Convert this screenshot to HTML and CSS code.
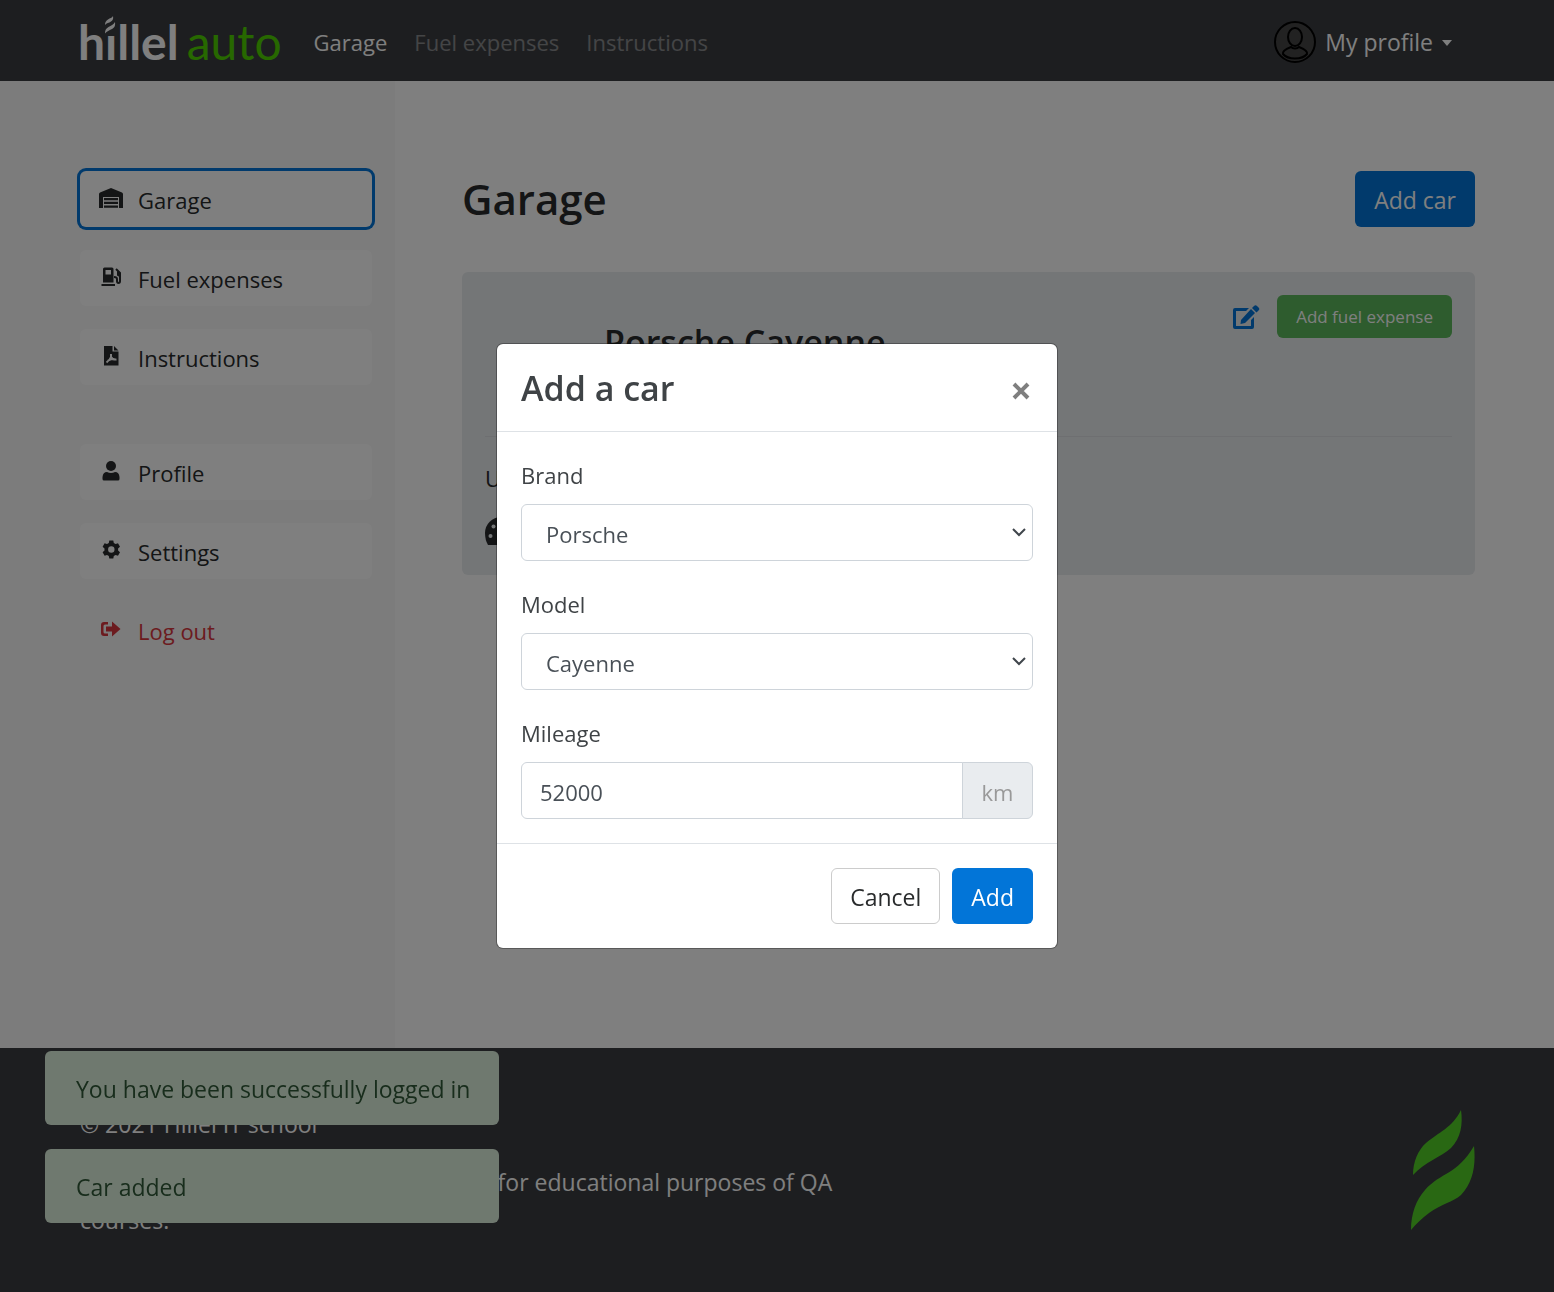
FILE: index.html
```html
<!DOCTYPE html>
<html lang="en">
<head>
<meta charset="utf-8">
<meta name="viewport" content="width=device-width, initial-scale=1">
<title>Hillel auto – Garage</title>
<link rel="stylesheet" href="styles.css">
</head>
<body>
<div class="page">
  <header class="header">
    <a class="logo" href="#">
      <span class="logo-name">hillel</span><span class="logo-auto">auto</span>
      <svg class="logo-flame" viewBox="0 0 12 21" aria-hidden="true"><path class="logo-patch" d="M0 0H12V21H0z"/><path d="M9 1C9.500 4 9 5 7 6.500C5 8 2.500 8 1 10C1 7 2 6 4 4.500C6 3 8 3 9 1z"/><path d="M11 7C11.500 11 10.500 12.500 8 14C5 15.500 3 16 1 18.500C1 15 2 13.500 4.500 12C7 10.500 9.500 10 11 7z"/></svg>
    </a>
    <nav class="header-nav">
      <a class="header-link is-active" href="#">Garage</a>
      <a class="header-link" href="#">Fuel expenses</a>
      <a class="header-link" href="#">Instructions</a>
    </nav>
    <button class="profile" type="button">
      <svg class="avatar" viewBox="0 0 42 42" aria-hidden="true"><circle cx="21" cy="21" r="20"/><ellipse cx="21" cy="16" rx="7" ry="9"/><path d="M17 26C12 28 8 30 9 33C14 39 28 39 33 33C34 30 30 28 25 26C23 28 19 28 17 26z"/></svg>
      <span>My profile</span>
      <span class="caret"></span>
    </button>
  </header>

  <div class="layout">
    <aside class="sidebar">
      <nav class="menu">
        <a class="menu-item is-active" href="#">
          <svg class="icon" viewBox="0 0 26 20"><path d="M1 20V6Q1 5 2 4.500L13 0L24 4.500Q25 5 25 6V20H21V9H5V20z"/><path d="M6 10H20V12.300H6zM6 13.700H20V16H6zM6 17.400H20V19.700H6z"/></svg>
          <span>Garage</span>
        </a>
        <a class="menu-item" href="#">
          <svg class="icon" viewBox="0 0 26 20"><path fill-rule="evenodd" d="M5 15.500V2Q5 .5 6.500 .5H14Q15.500 .5 15.500 2V15.500zM7.500 3V7.500H13V3zM3.500 17H17V19H3.500z"/><path class="line" d="M18 2L20 4V8L22 9V14Q22 16 20.500 16T19 14V12Q19 10 16 10M19 3L22 6V10"/></svg>
          <span>Fuel expenses</span>
        </a>
        <a class="menu-item" href="#">
          <svg class="icon" viewBox="0 0 26 20"><path d="M6 0H14.500V5.500H20.500V19.500H6zM16 0L20.500 4.500H16z"/><path class="knock" d="M13 8V11Q12 14 8.500 16.500M13 11Q14.500 14 18.500 13.500M10 14.500Q13 13 16 13"/></svg>
          <span>Instructions</span>
        </a>
      </nav>
      <nav class="menu">
        <a class="menu-item" href="#">
          <svg class="icon" viewBox="0 0 26 20"><circle cx="13" cy="5" r="5"/><path d="M4.500 18V16Q5 11 9 11Q13 12.800 17 11Q21 11 21.500 16V18Q21.500 19.500 20 19.500H6Q4.500 19.500 4.500 18z"/></svg>
          <span>Profile</span>
        </a>
        <a class="menu-item" href="#">
          <svg class="icon" viewBox="0 0 26 20"><path fill-rule="evenodd" d="M11.300 .5H15.300L15.800 3L17.600 4L20 3.200L22 6.700L20.100 8.500V10.500L22 12.300L20 15.800L17.600 15L15.800 16L15.300 18.500H11.300L10.800 16L9 15L6.600 15.800L4.600 12.300L6.500 10.500V8.500L4.600 6.700L6.600 3.200L9 4L10.800 3zM13.300 6.300A3.200 3.200 0 1 0 13.300 12.700A3.200 3.200 0 1 0 13.300 6.300z"/></svg>
          <span>Settings</span>
        </a>
        <a class="menu-item menu-logout" href="#">
          <svg class="icon" viewBox="0 0 26 20"><path d="M10 3H6Q3 3 3 6V14Q3 17 6 17H10V14.500H7Q5.500 14.500 5.500 13V7Q5.500 5.500 7 5.500H10z"/><path d="M8 7.500H14V2.500L22.500 10L14 17.500V12.500H8z"/></svg>
          <span>Log out</span>
        </a>
      </nav>
    </aside>

    <main class="content">
      <div class="content-head">
        <h1 class="content-title">Garage</h1>
        <button class="btn btn-primary" type="button">Add car</button>
      </div>
      <article class="car">
        <div class="car-head">
          <h2 class="car-name">Porsche Cayenne</h2>
          <div class="car-actions">
            <button class="car-edit" type="button" aria-label="Edit car"><svg class="edit-icon" viewBox="0 0 28 26"><path fill-rule="evenodd" d="M3 4H17L14 7H4V22H19V16L22 13V23Q22 25 20 25H3Q1 25 1 23V6Q1 4 3 4z"/><path d="M9 16L19 5L23 9L13 19L8.500 20zM20 4L22 2Q23.500 .5 25 2L27 4Q28 5 26.500 6.500L24.500 8.500z"/></svg></button>
            <button class="btn btn-small btn-success" type="button">Add fuel expense</button>
          </div>
        </div>
        <div class="car-body">
          <p class="car-update">Update mileage</p>
          <svg class="gauge" viewBox="0 0 32 28" aria-hidden="true"><path d="M16 0A16 16 0 0 0 0 16Q0 23 3 28H29Q32 23 32 16A16 16 0 0 0 16 0z"/><g class="gauge-dots"><circle cx="5.500" cy="19" r="2"/><circle cx="8.500" cy="9.500" r="2"/><circle cx="16" cy="5" r="2"/><circle cx="27" cy="19" r="2"/></g></svg>
        </div>
      </article>
    </main>
  </div>

  <footer class="footer">
    <div class="footer-text">
      <p>© 2021 Hillel IT school</p>
      <p>Hillel auto developed in Hillel IT school for educational purposes of QA courses.</p>
    </div>
    <svg class="footer-flame" viewBox="0 0 64 120" aria-hidden="true"><path d="M50 0C52 14 50 28 40 38C30 47 14 52 2 65C2 52 7 40 15 33C28 22 41 18 50 0z"/><path d="M63 36C65 56 62 72 50 85C42 92 30 94 18 103C11 108 5 114 0 120C0 104 5 90 14 80C30 62 46 65 63 36z"/></svg>
  </footer>
</div>

<div class="toasts">
  <p class="toast">You have been successfully logged in</p>
  <p class="toast">Car added</p>
</div>

<div class="backdrop">
  <form class="modal" role="dialog" aria-labelledby="modal-title">
    <div class="modal-head">
      <h2 class="modal-title" id="modal-title">Add a car</h2>
      <button class="modal-close" type="button" aria-label="Close"><svg class="close-icon" viewBox="0 0 18 18"><path d="M2 2L16 16M16 2L2 16"/></svg></button>
    </div>
    <div class="modal-body">
      <div class="field">
        <label for="brand">Brand</label>
        <div class="select-box">
          <select class="control" id="brand"><option>Porsche</option></select>
          <svg class="chevron" viewBox="0 0 16 10" aria-hidden="true"><path d="M2 2L8 8L14 2"/></svg>
        </div>
      </div>
      <div class="field">
        <label for="model">Model</label>
        <div class="select-box">
          <select class="control" id="model"><option>Cayenne</option></select>
          <svg class="chevron" viewBox="0 0 16 10" aria-hidden="true"><path d="M2 2L8 8L14 2"/></svg>
        </div>
      </div>
      <div class="field">
        <label for="mileage">Mileage</label>
        <div class="input-group">
          <input class="control" id="mileage" type="text" value="52000">
          <span class="unit">km</span>
        </div>
      </div>
    </div>
    <div class="modal-foot">
      <button class="btn btn-outline" type="button">Cancel</button>
      <button class="btn btn-primary" type="button">Add</button>
    </div>
  </form>
</div>
</body>
</html>
```
FILE: styles.css
```css
:root {
  --gutter: max(23px, calc((100vw - 1394px) / 2));
  --gutter-end: calc(var(--gutter) - 1px);
  --dark: #3a3c40;
  --blue: #0275d8;
}

* { box-sizing: border-box; }

body, h1, h2, p { margin: 0; }

body {
  font: 400 22px/36px "Open Sans", "Noto Sans", sans-serif;
  color: #292b2c;
  background: #fff;
}

button, input, select { font: inherit; color: inherit; }
button { cursor: pointer; }
a { color: inherit; text-decoration: none; }

.page {
  min-height: 100vh;
  display: flex;
  flex-direction: column;
}

/* Header */
.header {
  height: 81px;
  flex: none;
  padding: 2px calc(var(--gutter) + 22px) 0 var(--gutter);
  display: flex;
  align-items: center;
  background: var(--dark);
  color: #fff;
}

.logo {
  position: relative;
  display: flex;
  gap: 8px;
  margin-left: -2px;
  margin-right: 32px;
  font: 700 48px/56px Lato, sans-serif;
}
.logo-auto { color: #4fd000; font-weight: 400; }
.logo-flame {
  position: absolute;
  left: 26px;
  top: 1px;
  width: 12px;
  height: 21px;
  fill: #fff;
}
.logo-patch { fill: var(--dark); }

.header-nav { display: flex; gap: 27px; }
.header-link { opacity: .4; }
.header-link.is-active { opacity: 1; }

.profile {
  margin-left: auto;
  padding: 0;
  border: 0;
  background: none;
  display: flex;
  align-items: center;
  gap: 9px;
  font-size: 23px;
}
.avatar {
  width: 42px;
  height: 42px;
  fill: #444;
  stroke: #000;
  stroke-width: 2;
}
.caret {
  margin-top: 2px;
  border: 5px solid transparent;
  border-top: 6px solid #fff;
  border-bottom: 0;
}

/* Page columns */
.layout {
  flex: 1;
  display: flex;
}

.sidebar {
  flex: none;
  padding: 90px 23px 90px var(--gutter);
  background: #f8f8f8;
  display: flex;
  flex-direction: column;
  gap: 59px;
}
.menu {
  width: 292px;
  display: flex;
  flex-direction: column;
  gap: 23px;
}
.menu-item {
  min-height: 56px;
  padding: 2px 18px 0;
  display: flex;
  align-items: center;
  gap: 14px;
  border-radius: 6px;
  background: #fff;
}
.menu-item.is-active { box-shadow: 0 0 0 3px var(--blue); }
.menu-logout { background: none; color: #d9363e; }
.icon {
  width: 26px;
  height: 20px;
  margin-bottom: 4px;
  fill: currentColor;
}
.icon .line { fill: none; stroke: currentColor; stroke-width: 2; }
.icon .knock { fill: none; stroke: #fff; stroke-width: 2; }

.content {
  flex: 1;
  padding: 90px var(--gutter-end) 90px 67px;
}
.content-head {
  display: flex;
  justify-content: space-between;
  align-items: center;
  margin-bottom: 45px;
}
.content-title { font-size: 42px; line-height: 54px; font-weight: 600; }

.btn {
  min-height: 56px;
  padding: 2px 18px 0;
  border: 1px solid transparent;
  border-radius: 6px;
  font-size: 23px;
}
.btn-primary { background: var(--blue); color: #fff; }
.btn-success { background: #5cb85c; color: #fff; }
.btn-outline { background: #fff; border-color: #ccc; color: #292b2c; }
.btn-small {
  min-height: 43px;
  padding-top: 0;
  font-size: 17px;
  line-height: 24px;
}

.car {
  padding: 23px;
  border-radius: 6px;
  background: #e9ecef;
}
.car-head {
  min-height: 142px;
  padding-left: 119px;
  display: flex;
  justify-content: space-between;
  align-items: flex-start;
  border-bottom: 1px solid #dcdfe2;
}
.car-name {
  padding-top: 23px;
  font-size: 34px;
  line-height: 48px;
  font-weight: 600;
}
.car-actions { display: flex; align-items: center; gap: 17px; }
.car-edit { padding: 0; border: 0; background: none; display: flex; }
.edit-icon { width: 28px; height: 26px; fill: var(--blue); }
.car-body { padding-top: 23px; }
.gauge {
  display: block;
  margin: 21px 0 7px;
  width: 32px;
  height: 28px;
  fill: #292b2c;
}
.gauge .gauge-dots { fill: #e9ecef; }

/* Footer */
.footer {
  min-height: 244px;
  padding: 0 var(--gutter-end) 0 var(--gutter);
  display: flex;
  justify-content: space-between;
  align-items: center;
  background: var(--dark);
  color: #fff;
}
.footer-text {
  max-width: 760px;
  display: flex;
  flex-direction: column;
  gap: 20px;
  padding-top: 4px;
  font-size: 23px;
  line-height: 38px;
}
.footer-flame { width: 64px; height: 120px; fill: #52d027; }

/* Notifications */
.toasts {
  position: fixed;
  left: 45px;
  bottom: 69px;
  display: flex;
  flex-direction: column;
  gap: 24px;
}
.toast {
  min-height: 74px;
  padding: 20px 29px 18px 31px;
  border-radius: 6px;
  background: #dff2df;
  color: #305a38;
  font-size: 23px;
}

/* Add car dialog */
.backdrop {
  position: fixed;
  inset: 0;
  display: flex;
  align-items: center;
  justify-content: center;
  background: rgba(0, 0, 0, .5);
}
.modal {
  width: 560px;
  max-width: 100%;
  border-radius: 6px;
  background: #fff;
  box-shadow: 0 0 0 1px rgba(0, 0, 0, .3);
  color: #3f4346;
}
.modal-head {
  padding: 20px 27px 18px 24px;
  display: flex;
  justify-content: space-between;
  align-items: center;
  border-bottom: 1px solid #dee2e6;
}
.modal-title { font-size: 34px; line-height: 49px; font-weight: 600; }
.modal-close { padding: 4px 0 0; border: 0; background: none; display: flex; }
.close-icon { width: 18px; height: 18px; stroke: #7f7f7f; stroke-width: 4; }

.modal-body {
  padding: 24px;
  display: flex;
  flex-direction: column;
  gap: 24px;
}
.field {
  display: flex;
  flex-direction: column;
  gap: 10px;
  line-height: 38px;
}
.control {
  width: 100%;
  height: 57px;
  padding: 3px 18px 0;
  border: 1px solid #ced4da;
  border-radius: 6px;
  background: #fff;
  color: #495057;
}
.select-box { position: relative; }
.select-box .control { appearance: none; padding-left: 24px; }
.chevron {
  position: absolute;
  right: 6px;
  top: 23px;
  width: 16px;
  height: 10px;
  fill: none;
  stroke: #40464c;
  stroke-width: 2;
  pointer-events: none;
}
.input-group { display: flex; }
.input-group .control {
  flex: 1;
  min-width: 0;
  border-radius: 6px 0 0 6px;
}
.unit {
  width: 71px;
  padding-top: 10px;
  margin-left: -1px;
  border: 1px solid #ced4da;
  border-radius: 0 6px 6px 0;
  background: #e9ecef;
  color: #999;
  text-align: center;
}
.modal-foot {
  padding: 24px;
  display: flex;
  justify-content: flex-end;
  gap: 12px;
  border-top: 1px solid #dee2e6;
}
```
